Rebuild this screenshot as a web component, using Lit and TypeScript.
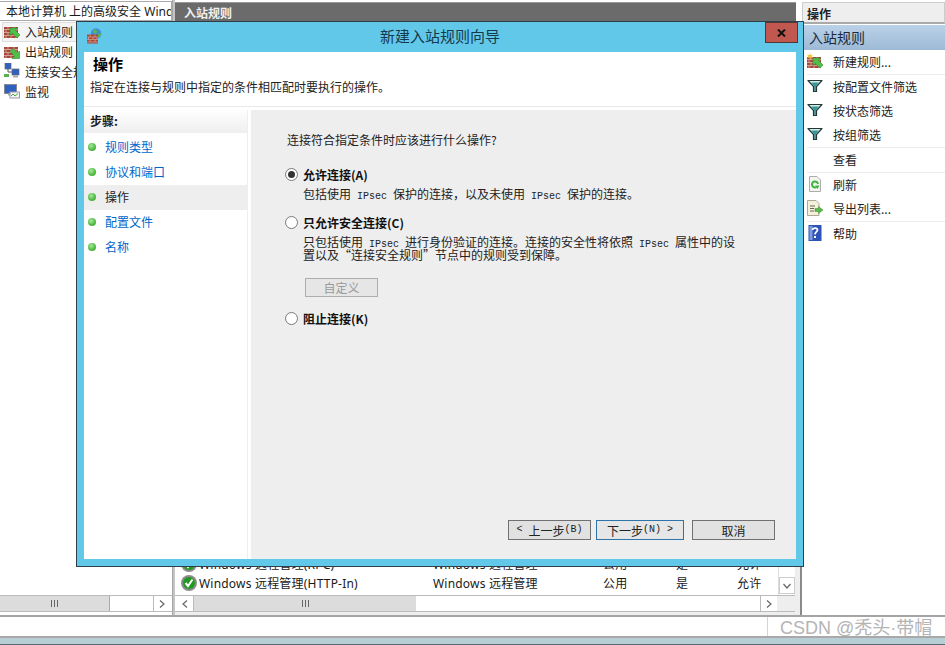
import { LitElement, html, css, svg } from "lit";
import { customElement } from "lit/decorators.js";

const bricks = svg`
  <rect x="0" y="4" width="14" height="11" fill="#a8483a"/>
  <path d="M0 6.500H14M0 9.500H14M0 12.500H14M4 4V6.500M10 4V6.500M2 6.500V9.500M7 6.500V9.500M12 6.500V9.500M4 9.500V12.500M10 9.500V12.500M2 12.500V15M7 12.500V15M12 12.500V15" stroke="#d9b3a3" stroke-width=".8" fill="none"/>`;

const wall = (kind: "in" | "out" | "new") => html`<svg class="ico" viewBox="0 0 16 16">
  ${bricks}
  ${kind === "out"
    ? svg`<path d="M15.500 15.500H8L10.500 13L6 8.500L9 5.500L13.500 10L15.500 8Z" fill="#4fbf48" stroke="#2f8a2f" stroke-width=".6"/>`
    : svg`<path d="M6 5H13.500L11.500 7.500L16 12L13 15L8.500 10.500L6 12.500Z" fill="#4fbf48" stroke="#2f8a2f" stroke-width=".6"/>`}
  ${kind === "new" ? svg`<path d="M3 0L3.800 2.200L6 1.500L4.600 3.400L6 5.200L3.800 4.600L3 6.500L2.200 4.600L0 5.200L1.400 3.400L0 1.500L2.200 2.200Z" fill="#f5c12e"/>` : ""}
</svg>`;

const conn = html`<svg class="ico" viewBox="0 0 16 16">
  <rect x="1" y="0" width="6" height="6" fill="#2f62c0" stroke="#667" stroke-width=".7"/>
  <rect x="8" y="6" width="7" height="6" fill="#2f62c0" stroke="#667" stroke-width=".7"/>
  <path d="M4 6V9H8" stroke="#555" fill="none"/>
  <rect x="0" y="11" width="5" height="3" fill="#57b24d"/>
  <rect x="9" y="12.500" width="5" height="2" fill="#aaa"/>
</svg>`;

const monitor = html`<svg class="ico" viewBox="0 0 16 16">
  <rect x="0.500" y="1.500" width="12" height="9" fill="#2f62c0" stroke="#889"/>
  <rect x="4" y="10.500" width="5" height="2" fill="#aaa"/>
  <rect x="6" y="9" width="9.500" height="6" fill="#f2f5f4" stroke="#99a"/>
  <path d="M7 13L9 11L11 13L14 10.500" stroke="#47a943" fill="none"/>
</svg>`;

const funnel = html`<svg class="ico" viewBox="0 0 16 16">
  <path d="M1 2.500H15L9.500 8.500V13.500H6.500V8.500Z" fill="#dfe6e5" stroke="#1d3a3a" stroke-width="1.200" stroke-linejoin="round"/>
  <path d="M4.500 4.500H11.500L9 8H7Z" fill="#2a9b9b"/>
  <rect x="7.300" y="8" width="1.400" height="5" fill="#2a6f6f"/>
</svg>`;

const refresh = html`<svg class="ico" viewBox="0 0 16 16">
  <path d="M2.500 .5H10L13.500 4V15.500H2.500Z" fill="#f4f5f0" stroke="#a9acab"/>
  <path d="M11 8A3 3 0 1 0 9.500 11" stroke="#3cb73c" stroke-width="2" fill="none"/>
  <path d="M8 9.500L12.500 9.500L10.500 13Z" fill="#3cb73c"/>
</svg>`;

const exportIco = html`<svg class="ico" viewBox="0 0 16 16">
  <path d="M.5 .5H9L12 3.500V15.500H.5Z" fill="#f5f1d8" stroke="#a9a99a"/>
  <path d="M3 6H8M3 8.500H7M3 11H7" stroke="#666" fill="none"/>
  <path d="M8 8.500H11.500V6.500L16 10L11.500 13.500V11.500H8Z" fill="#57b948" stroke="#3b8f35" stroke-width=".5"/>
</svg>`;

const helpIco = html`<svg class="ico" viewBox="0 0 16 16">
  <rect x="1.500" y="0" width="13" height="16" fill="#2d52b8"/>
  <rect x="2.500" y="1" width="3" height="14" fill="#7f9be0"/>
  <path d="M5.500 5C5.800 2.500 10.500 2.500 10.500 5C10.500 7 8 7 8 9.500" stroke="#fff" stroke-width="1.700" fill="none"/>
  <rect x="7" y="11" width="2" height="2" fill="#fff"/>
</svg>`;

const lat = (s: string) => html`<span class="lat">${s}</span>`;

@customElement("app-root")
export class AppRoot extends LitElement {
  static styles = css`
    :host {
      display: block;
      width: 945px;
      height: 645px;
      position: relative;
      overflow: hidden;
      background: #fff;
      font-family: "Noto Sans CJK SC", "Liberation Sans", sans-serif;
      font-size: 12px;
      color: #1a1a1a;
    }
    * { box-sizing: border-box; }
    .ico { width: 16px; height: 16px; flex: none; display: block; }
    .lat { font-family: "Liberation Mono", monospace; font-size: 10px; white-space: pre; line-height: 0; }

    .page { display: flex; flex-direction: column; height: 645px; }
    .panes { display: flex; height: 617px; border-bottom: 2px solid #a5a5a5; flex: none; }
    .status { flex: 1; display: flex; justify-content: flex-end; }
    .status-cell { width: 178px; border-left: 1px solid #d5d5d5; }
    .taskbar { height: 9px; flex: none; background: #b8ced7; border-top: 2px solid #a9a9a9; border-bottom: 1px solid #5a6a72; }

    .left { width: 172px; flex: none; display: flex; flex-direction: column; padding-top: 1px; }
    .tab {
      height: 20px; border: 1px solid #aaa; border-left: 0; flex: none;
      line-height: 20px; padding-left: 6px; font-size: 12px;
      font-family: "Noto Sans", "Noto Sans CJK SC", sans-serif;
      white-space: nowrap; overflow: hidden;
    }
    .tree { flex: 1; padding: 1px 0 0 2px; }
    .tree-item { display: flex; align-items: center; gap: 5px; height: 20px; padding: 0 0 2px 2px; white-space: nowrap; color: #222; }
    .tree-item.sel { background: #f4f4f4; border: 1px solid #ddd; padding-left: 1px; }
    .sbar { height: 17px; flex: none; display: flex; border-top: 1px solid #bbb; border-bottom: 1px solid #bbb; background: #fff; margin-bottom: 3px; }
    .thumb { background: #dcdcdc; border-right: 1px solid #aaa; display: flex; align-items: center; justify-content: center; color: #666; }
    .left .thumb { width: 110px; }
    .grip { width: 7px; height: 7px; background: repeating-linear-gradient(90deg, #666 0 1px, transparent 1px 3px); }
    .sbtn { width: 17px; flex: none; display: flex; align-items: center; justify-content: center; border-left: 1px solid #bbb; background: #fff; }
    .sbtn.l { border-left: 0; border-right: 1px solid #bbb; }
    .sbtn svg { width: 8px; height: 8px; }
    .sgap { width: 2px; flex: none; }
    .splitter { width: 3px; flex: none; background: #c4c4c4; border-left: 1px solid #a5a5a5; }

    .mid { width: 625px; flex: none; display: flex; flex-direction: column; padding: 2px 5px 0 0; background: linear-gradient(#fff 24px, #eee 24px); }
    .mid-head { height: 19px; flex: none; margin-right: -1px; background: #6b6b6b; color: #f0f0f0; font-weight: 700; line-height: 19px; padding-left: 9px; border-top: 1px solid #999; }
    .table { flex: 1; min-height: 0; display: flex; background: #fff; }
    .rows { flex: 1; min-width: 0; display: flex; flex-direction: column; justify-content: flex-end; overflow: hidden; padding-left: 6px; }
    .row { height: 19px; display: grid; grid-template-columns: 252px 170px 73px 61px 1fr; align-items: center; white-space: nowrap; flex: none; margin-bottom: 3px; font-family: "Noto Sans", "Noto Sans CJK SC", sans-serif; font-size: 12px; letter-spacing: .2px; }
    .row.cut { margin-bottom: 0; }
    .rname { display: flex; align-items: center; gap: 2px; }
    .vbar { width: 17px; flex: none; border-left: 1px solid #ddd; display: flex; flex-direction: column; justify-content: flex-end; padding-bottom: 1px; }
    .vdown { height: 17px; border: 1px solid #ccc; display: flex; align-items: center; justify-content: center; }
    .vdown svg { width: 8px; height: 8px; }
    .mid .sbar { margin: 0; padding: 0 18px 0 2px; background: linear-gradient(90deg, #fff 602px, #eee 602px); }
    .mid .thumb { width: 222px; border-right: 0; }
    .track { flex: 1; background: #fff; }
    .mid-bottom { height: 3px; flex: none; background: #eee; }

    .vline { width: 2px; flex: none; background: #8a8a8a; margin-top: 24px; }

    .right { width: 143px; flex: none; display: flex; flex-direction: column; padding-top: 2px; }
    .r-head { height: 22px; flex: none; border: 1px solid #ccc; border-bottom: 2px solid #a9a9a9; background: #eee; font-weight: 700; line-height: 21px; padding-left: 4px; color: #222; }
    .r-title { height: 25px; flex: none; margin: 1px 0 0 2px; background: linear-gradient(#bad1e8, #9dbad6); font-size: 14px; line-height: 25px; padding-left: 5px; color: #1b2b3c; }
    .acts { padding-left: 5px; }
    .act { display: flex; align-items: center; height: 24px; gap: 10px; color: #222; white-space: nowrap; padding-bottom: 2px; }
    .act .blank { width: 16px; }
    .sep { height: 1px; background: #ececec; }

    .watermark {
      position: absolute; left: 780px; top: 613px;
      font-family: "Liberation Sans", "Noto Sans CJK SC", sans-serif;
      font-size: 18px; color: #b4b4b4; white-space: nowrap;
    }

    .dialog {
      position: absolute; left: 76px; top: 21px; width: 728px; height: 546px;
      background: #62c8ea; border: 1px solid #2f3f4a;
      display: flex; flex-direction: column; padding: 0 7px 7px 7px;
    }
    .titlebar { height: 30px; flex: none; display: flex; align-items: center; position: relative; }
    .d-icon { width: 16px; height: 16px; margin: 0 0 2px 2px; display: block; }
    .d-title { position: absolute; left: 0; right: 0; top: 0; text-align: center; font-size: 15px; color: #163a4c; line-height: 28px; }
    .close {
      position: absolute; right: -2px; top: 0; width: 33px; height: 21px;
      background: #c0584f; border: 1px solid #4b3a38; display: flex; align-items: center; justify-content: center;
    }
    .close svg { width: 9px; height: 8px; }
    .client { flex: 1; min-height: 0; background: #fff; display: flex; flex-direction: column; }
    .d-head { height: 55px; flex: none; padding: 3px 0 0 6px; border-bottom: 1px solid #e9e9e9; }
    .d-h1 { font-size: 15px; font-weight: 700; line-height: 18px; padding-left: 3px; color: #000; }
    .d-sub { line-height: 16px; margin-top: 6px; color: #222; }
    .d-body { flex: 1; min-height: 0; display: flex; padding-top: 3px; }
    .nav { width: 164px; flex: none; border-right: 1px solid #eee; }
    .nav-head { height: 23px; background: linear-gradient(#fff, #eee); font-weight: 700; line-height: 21px; padding-left: 6px; margin-bottom: 2px; }
    .nav-item { height: 25px; display: flex; align-items: center; padding: 0 0 2px 4px; gap: 9px; color: #0066cc; }
    .nav-item.cur { background: #eee; color: #222; }
    .dot { width: 8px; height: 8px; border-radius: 50%; background: radial-gradient(circle at 40% 35%, #a8e89a, #4db840 60%, #3ea233); flex: none; }
    .panel { flex: 1; min-width: 0; margin-left: 3px; background: #eee; padding: 22px 21px 19px 34px; display: flex; flex-direction: column; }
    .q { line-height: 16px; padding-left: 2px; color: #222; }
    .opt { display: flex; align-items: center; gap: 5px; height: 16px; font-weight: 700; color: #111; }
    .opt.o1 { margin-top: 18px; }
    .opt.o2 { margin-top: 14px; }
    .opt.o3 { margin-top: 13px; }
    .radio { width: 13px; height: 13px; border-radius: 50%; border: 1px solid #7a7a7a; background: #fff; flex: none; display: flex; align-items: center; justify-content: center; }
    .radio.on::after { content: ""; width: 7px; height: 7px; border-radius: 50%; background: #333; }
    .desc { margin: 5px 0 0 18px; line-height: 13px; color: #222; white-space: nowrap; }
    .custom { margin: 17px 0 0 20px; width: 73px; height: 19px; border: 1px solid #adadad; display: flex; align-items: center; justify-content: center; color: #9a9a9a; background: #e6e6e6; padding-bottom: 1px; }
    .btns { margin-top: auto; display: flex; padding-left: 223px; }
    .btn { height: 20px; border: 1px solid #707070; background: #e1e1e1; display: flex; align-items: center; justify-content: center; color: #222; white-space: pre; }
    .btn.back { width: 83px; }
    .btn.next { width: 88px; margin-left: 5px; border-color: #2f73ab; background: #e6e6e6; }
    .btn.cancel { width: 83px; margin-left: 8px; }
  `;

  render() {
    const chevR = html`<svg viewBox="0 0 8 8"><path d="M2 0.500L6 4L2 7.500" fill="none" stroke="#666" stroke-width="1.200"/></svg>`;
    const chevL = html`<svg viewBox="0 0 8 8"><path d="M6 0.500L2 4L6 7.500" fill="none" stroke="#666" stroke-width="1.200"/></svg>`;
    const chevD = html`<svg viewBox="0 0 8 8"><path d="M0.500 2L4 6L7.500 2" fill="none" stroke="#666" stroke-width="1.200"/></svg>`;
    const check = html`<svg class="ico" viewBox="0 0 16 16">
      <circle cx="8" cy="8" r="8" fill="#8c8c8c"/>
      <circle cx="8" cy="8" r="6" fill="#1f9a1f"/>
      <path d="M4.500 8L7 11L11.500 4.500" fill="none" stroke="#fff" stroke-width="2"/>
    </svg>`;
    return html`
      <div class="page">
        <div class="panes">
          <div class="left">
            <div class="tab">本地计算机 上的高级安全 Wind</div>
            <div class="tree">
              <div class="tree-item sel">${wall("in")}入站规则</div>
              <div class="tree-item">${wall("out")}出站规则</div>
              <div class="tree-item">${conn}连接安全规则</div>
              <div class="tree-item">${monitor}监视</div>
            </div>
            <div class="sbar">
              <div class="thumb"><span class="grip"></span></div>
              <div class="track"></div>
              <div class="sbtn">${chevR}</div>
              <div class="sgap"></div>
            </div>
          </div>
          <div class="splitter"></div>
          <div class="mid">
            <div class="mid-head">入站规则</div>
            <div class="table">
              <div class="rows">
                <div class="row cut">
                  <div class="rname">${check}Windows 远程管理(RPC)</div><div>Windows 远程管理</div><div>公用</div><div>是</div><div>允许</div>
                </div>
                <div class="row">
                  <div class="rname">${check}Windows 远程管理(HTTP-In)</div>
                  <div>Windows 远程管理</div><div>公用</div><div>是</div><div>允许</div>
                </div>
              </div>
              <div class="vbar"><div class="vdown">${chevD}</div></div>
            </div>
            <div class="sbar">
              <div class="sbtn l">${chevL}</div>
              <div class="thumb"><span class="grip"></span></div>
              <div class="track"></div>
              <div class="sbtn">${chevR}</div>
            </div>
            <div class="mid-bottom"></div>
          </div>
          <div class="vline"></div>
          <div class="right">
            <div class="r-head">操作</div>
            <div class="r-title">入站规则</div>
            <div class="acts">
              <div class="act">${wall("new")}新建规则...</div>
              <div class="sep"></div>
              <div class="act">${funnel}按配置文件筛选</div>
              <div class="act">${funnel}按状态筛选</div>
              <div class="act">${funnel}按组筛选</div>
              <div class="sep"></div>
              <div class="act"><span class="blank"></span>查看</div>
              <div class="sep"></div>
              <div class="act">${refresh}刷新</div>
              <div class="act">${exportIco}导出列表...</div>
              <div class="sep"></div>
              <div class="act">${helpIco}帮助</div>
            </div>
          </div>
        </div>
        <div class="status"><div class="status-cell"></div></div>
        <div class="taskbar"></div>
      </div>

      <div class="dialog">
        <div class="titlebar">
          <svg class="d-icon" viewBox="0 0 16 16">
            <circle cx="10" cy="5.500" r="5.300" fill="#3f8fd8"/>
            <path d="M7 2C9 .5 12 2 10.500 5C9 6.500 7 5 7 2ZM12 6.500L15 5C15.500 8 13 10 12 9Z" fill="#5cba4a"/>
            <rect x="1" y="6.500" width="11" height="9" fill="#a8483a"/>
            <path d="M1 9H12M1 11.500H12M1 14H12M4 6.500V9M9 6.500V9M2.500 9V11.500M7 9V11.500M11 9V11.500M4 11.500V14M9 11.500V14" stroke="#d9a898" stroke-width=".7" fill="none"/>
          </svg>
          <div class="d-title">新建入站规则向导</div>
          <div class="close"><svg viewBox="0 0 9 8"><path d="M1 .5L8 7.500M8 .5L1 7.500" stroke="#111" stroke-width="2" fill="none"/></svg></div>
        </div>
        <div class="client">
          <div class="d-head">
            <div class="d-h1">操作</div>
            <div class="d-sub">指定在连接与规则中指定的条件相匹配时要执行的操作。</div>
          </div>
          <div class="d-body">
            <div class="nav">
              <div class="nav-head">步骤:</div>
              <div class="nav-item"><span class="dot"></span>规则类型</div>
              <div class="nav-item"><span class="dot"></span>协议和端口</div>
              <div class="nav-item cur"><span class="dot"></span>操作</div>
              <div class="nav-item"><span class="dot"></span>配置文件</div>
              <div class="nav-item"><span class="dot"></span>名称</div>
            </div>
            <div class="panel">
              <div class="q">连接符合指定条件时应该进行什么操作?</div>
              <div class="opt o1"><span class="radio on"></span>允许连接(A)</div>
              <div class="desc">包括使用${lat(" IPsec ")}保护的连接，以及未使用${lat(" IPsec ")}保护的连接。</div>
              <div class="opt o2"><span class="radio"></span>只允许安全连接(C)</div>
              <div class="desc">只包括使用${lat(" IPsec ")}进行身份验证的连接。连接的安全性将依照${lat(" IPsec ")}属性中的设<br />置以及“连接安全规则”节点中的规则受到保障。</div>
              <div class="custom">自定义</div>
              <div class="opt o3"><span class="radio"></span>阻止连接(K)</div>
              <div class="btns">
                <div class="btn back">${lat("< ")}上一步${lat("(B)")}</div>
                <div class="btn next">下一步${lat("(N) >")}</div>
                <div class="btn cancel">取消</div>
              </div>
            </div>
          </div>
        </div>
      </div>
      <div class="watermark">CSDN @秃头·带帽</div>
    `;
  }
}
